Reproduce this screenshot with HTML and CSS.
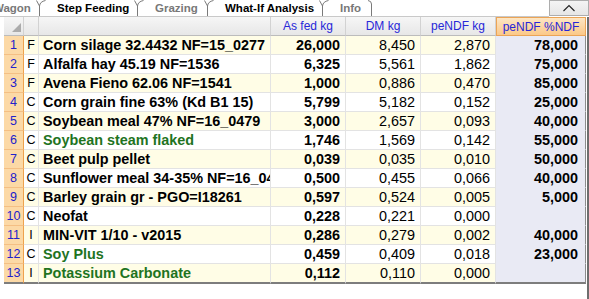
FILE: index.html
```html
<!DOCTYPE html>
<html>
<head>
<meta charset="utf-8">
<link rel="stylesheet" href="styles.css">
</head>
<body>
<div class="app">
  <div class="topbar">
    <div class="tabs">
      <div class="tab tab-wagon dim"><span>Wagon</span></div>
      <div class="tab tab-step"><svg class="edge" width="12" height="17" viewBox="0 0 12 17"><path d="M3.5 17V6M3.5 6Q4 1.5 9.5 0.5M3.5 6L0.5 0.5" fill="none" stroke="#7a7a7a" stroke-width="1"/></svg><span>Step Feeding</span></div>
      <div class="tab tab-grazing dim"><svg class="edge" width="12" height="17" viewBox="0 0 12 17"><path d="M3.5 17V6M3.5 6Q4 1.5 9.5 0.5M3.5 6L0.5 0.5" fill="none" stroke="#7a7a7a" stroke-width="1"/></svg><span>Grazing</span></div>
      <div class="tab tab-whatif"><svg class="edge" width="12" height="17" viewBox="0 0 12 17"><path d="M3.5 17V6M3.5 6Q4 1.5 9.5 0.5M3.5 6L0.5 0.5" fill="none" stroke="#7a7a7a" stroke-width="1"/></svg><span>What-If Analysis</span></div>
      <div class="tab tab-info dim"><svg class="edge" width="12" height="17" viewBox="0 0 12 17"><path d="M3.5 17V6M3.5 6Q4 1.5 9.5 0.5M3.5 6L0.5 0.5" fill="none" stroke="#7a7a7a" stroke-width="1"/></svg><span>Info</span><svg class="edge-r" width="6" height="17" viewBox="0 0 6 17"><path d="M3.5 17V4Q3.5 1 0 0.5" fill="none" stroke="#7a7a7a" stroke-width="1"/></svg></div>
    </div>
    <div class="collapse"><svg width="14" height="8" viewBox="0 0 14 8"><path d="M1.5 7L7 1.5L12.5 7" fill="none" stroke="#222" stroke-width="1.1"/></svg></div>
  </div>
  <div class="body">
    <div class="grid">
      <div class="row head">
        <div class="c num corner"><span class="tri"></span></div>
        <div class="c typ"></div>
        <div class="c name"></div>
        <div class="c h">As fed kg</div>
        <div class="c h">DM kg</div>
        <div class="c h">peNDF kg</div>
        <div class="c h sel">peNDF %NDF</div>
      </div>
      <div class="row odd">
        <div class="c num">1</div><div class="c typ">F</div><div class="c name">Corn silage 32.4432 NF=15_0277</div>
        <div class="c v b">26,000</div><div class="c v">8,450</div><div class="c v">2,870</div><div class="c v b pct">78,000</div>
      </div>
      <div class="row">
        <div class="c num">2</div><div class="c typ">F</div><div class="c name">Alfalfa hay 45.19 NF=1536</div>
        <div class="c v b">6,325</div><div class="c v">5,561</div><div class="c v">1,862</div><div class="c v b pct">75,000</div>
      </div>
      <div class="row odd">
        <div class="c num">3</div><div class="c typ">F</div><div class="c name">Avena Fieno 62.06 NF=1541</div>
        <div class="c v b">1,000</div><div class="c v">0,886</div><div class="c v">0,470</div><div class="c v b pct">85,000</div>
      </div>
      <div class="row">
        <div class="c num">4</div><div class="c typ">C</div><div class="c name">Corn grain fine 63% (Kd B1 15)</div>
        <div class="c v b">5,799</div><div class="c v">5,182</div><div class="c v">0,152</div><div class="c v b pct">25,000</div>
      </div>
      <div class="row odd">
        <div class="c num">5</div><div class="c typ">C</div><div class="c name">Soybean meal 47% NF=16_0479</div>
        <div class="c v b">3,000</div><div class="c v">2,657</div><div class="c v">0,093</div><div class="c v b pct">40,000</div>
      </div>
      <div class="row">
        <div class="c num">6</div><div class="c typ">C</div><div class="c name green">Soybean steam flaked</div>
        <div class="c v b">1,746</div><div class="c v">1,569</div><div class="c v">0,142</div><div class="c v b pct">55,000</div>
      </div>
      <div class="row odd">
        <div class="c num">7</div><div class="c typ">C</div><div class="c name">Beet pulp pellet</div>
        <div class="c v b">0,039</div><div class="c v">0,035</div><div class="c v">0,010</div><div class="c v b pct">50,000</div>
      </div>
      <div class="row">
        <div class="c num">8</div><div class="c typ">C</div><div class="c name">Sunflower meal 34-35% NF=16_0480</div>
        <div class="c v b">0,500</div><div class="c v">0,455</div><div class="c v">0,066</div><div class="c v b pct">40,000</div>
      </div>
      <div class="row odd">
        <div class="c num">9</div><div class="c typ">C</div><div class="c name">Barley grain gr - PGO=I18261</div>
        <div class="c v b">0,597</div><div class="c v">0,524</div><div class="c v">0,005</div><div class="c v b pct">5,000</div>
      </div>
      <div class="row">
        <div class="c num">10</div><div class="c typ">C</div><div class="c name">Neofat</div>
        <div class="c v b">0,228</div><div class="c v">0,221</div><div class="c v">0,000</div><div class="c v b pct"></div>
      </div>
      <div class="row odd">
        <div class="c num">11</div><div class="c typ">I</div><div class="c name">MIN-VIT 1/10 - v2015</div>
        <div class="c v b">0,286</div><div class="c v">0,279</div><div class="c v">0,002</div><div class="c v b pct">40,000</div>
      </div>
      <div class="row">
        <div class="c num">12</div><div class="c typ">C</div><div class="c name green">Soy Plus</div>
        <div class="c v b">0,459</div><div class="c v">0,409</div><div class="c v">0,018</div><div class="c v b pct">23,000</div>
      </div>
      <div class="row odd last">
        <div class="c num">13</div><div class="c typ">I</div><div class="c name green">Potassium Carbonate</div>
        <div class="c v b">0,112</div><div class="c v">0,110</div><div class="c v">0,000</div><div class="c v b pct"></div>
      </div>
    </div>
  </div>
</div>
</body>
</html>
```
FILE: styles.css
```css
* { box-sizing: border-box; }
html, body { margin: 0; padding: 0; background: #fff; }
body {
  font-family: "Liberation Sans", Arial, sans-serif;
  width: 589px;
  height: 299px;
  overflow: hidden;
}
.app { width: 589px; height: 299px; display: flex; flex-direction: column; }

.topbar { display: flex; height: 17px; flex: none; }
.tabs {
  flex: 1;
  display: flex;
  height: 17px;
  border-bottom: 1px solid #c9c9c9;
  overflow: hidden;
}
.tab {
  position: relative;
  flex: none;
  height: 16px;
  padding-left: 17px;
  font-size: 11.5px;
  font-weight: bold;
  line-height: 16px;
  color: #000;
  white-space: nowrap;
}
.tab.dim { color: #787878; }
.tab-wagon { width: 40px; padding-left: 0; overflow: hidden; }
.tab-wagon span { margin-left: -7px; }
.tab-step { width: 98px; }
.tab-grazing { width: 70px; }
.tab-whatif { width: 115px; }
.tab-info { width: 47px; }
.edge { position: absolute; left: -4px; top: 0; }
.edge-r { position: absolute; right: -4px; top: 0; }

.collapse {
  flex: none;
  width: 40px;
  height: 16px;
  border: 1px solid #adadad;
  background: linear-gradient(#f4f4f4, #e6e6e6);
  display: flex;
  align-items: center;
  justify-content: center;
}

.body {
  flex: 1;
  padding-left: 4px;
  border-right: 2px solid #6e6e6e;
}
.grid {
  display: grid;
  grid-template-columns: 20px 15px 232px 75px 75px 75px 90px;
  grid-template-rows: repeat(13, 19px) 20px;
  width: 582px;
}
.row { display: contents; }
.c {
  display: flex;
  align-items: center;
  overflow: hidden;
  white-space: nowrap;
  border-right: 1px solid #e3e3e3;
  border-bottom: 1px solid #e3e3e3;
  font-size: 14.4px;
  color: #000;
  background: #fff;
}
.row.odd .c { background: #fffde6; }

.c.num {
  justify-content: center;
  font-size: 12.5px;
  color: #2222cc;
  background: #fcd9a6;
  border-right-color: #eea24e;
  border-bottom-color: #f4bf84;
}
.row.odd .c.num { background: #fcd9a6; }
.c.typ { justify-content: center; font-size: 12.5px; }
.c.name { padding-left: 4px; font-weight: bold; }
.c.name.green { color: #1f741f; }
.c.v { justify-content: flex-end; padding-right: 5px; }
.c.v.b { font-weight: bold; }
.c.pct,
.row.odd .c.pct {
  background: #e9eaf4;
  border-right-color: #8c8c8c;
  border-bottom-color: #e9eaf4;
  padding-right: 7px;
}
.row.last .c { height: 20px; border-bottom: 2px solid #7d7d7d; }
.row.last .c.pct { border-bottom-color: #7d7d7d; }

.row.head .c {
  background: linear-gradient(#f6f6f6, #e7e7e7);
  border-right-color: #d2d2d2;
  border-bottom-color: #bcbcbc;
  font-size: 12px;
  color: #2727d8;
  justify-content: center;
}
.row.head .c.corner { position: relative; border-right-color: #d2d2d2; }
.tri {
  position: absolute;
  right: 2px;
  bottom: 3px;
  width: 0;
  height: 0;
  border-left: 9px solid transparent;
  border-bottom: 9px solid #ababab;
}
.row.head .c.sel {
  background: linear-gradient(#fde6c4, #fbc888);
  border: 1px solid #eba456;
  color: #2727d8;
}
```
